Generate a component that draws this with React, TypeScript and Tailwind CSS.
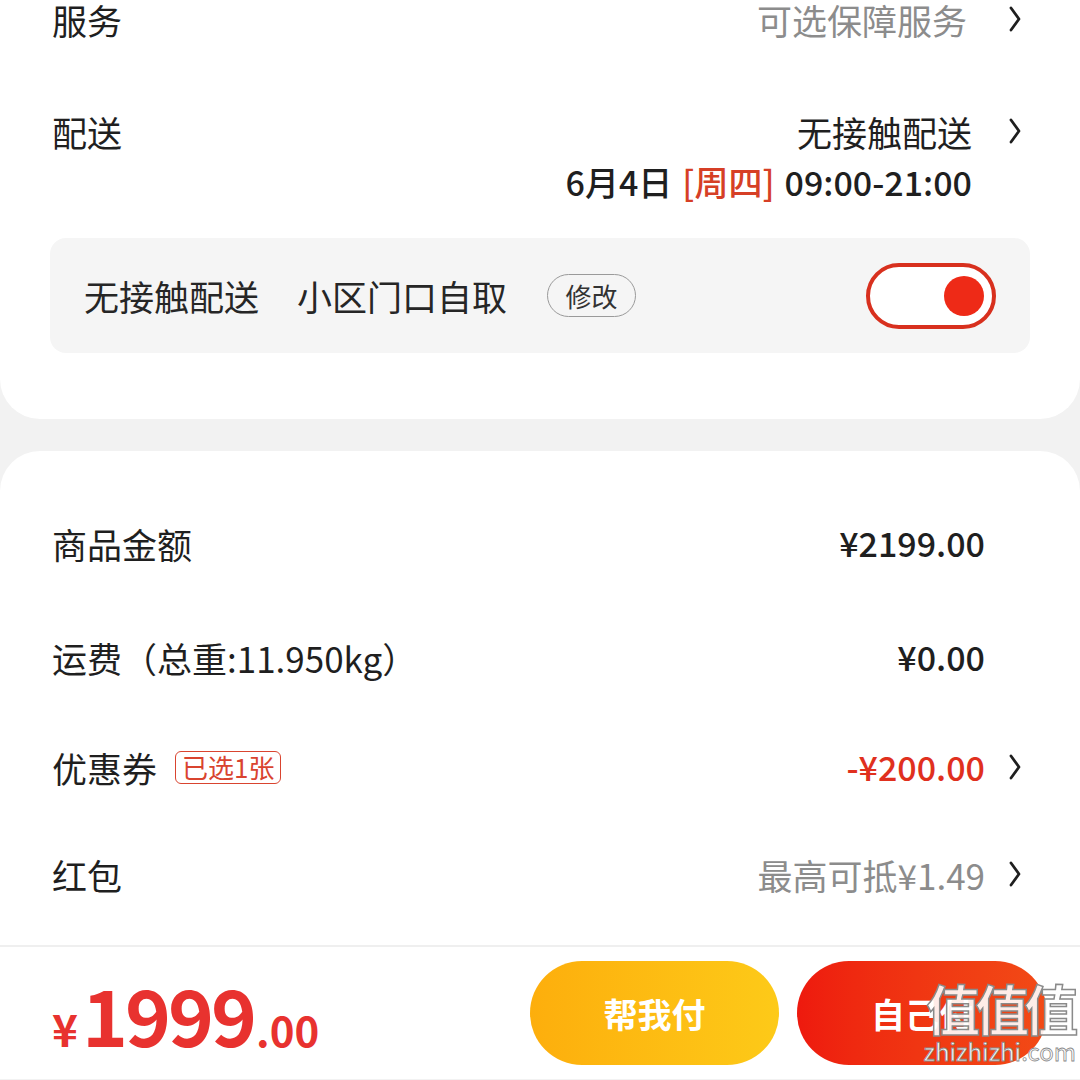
import React from "react";

const font = { fontFamily: '"Noto Sans CJK SC", "Noto Sans", sans-serif' };

function Chevron() {
  return (
    <span className="flex w-[37px] justify-end">
      <svg width="14" height="26" viewBox="0 0 14 26" fill="none">
        <polyline
          points="3,2 11,13 3,24"
          stroke="#1f1f1f"
          strokeWidth="2.8"
          strokeLinecap="round"
          strokeLinejoin="round"
        />
      </svg>
    </span>
  );
}

function Row({
  label,
  right,
  arrow,
  className,
}: {
  label: React.ReactNode;
  right: React.ReactNode;
  arrow?: boolean;
  className: string;
}) {
  return (
    <div className={`flex items-center justify-between ${className}`}>
      <div className="flex items-center text-[35px] leading-none text-[#1f1f1f]">{label}</div>
      <div className="flex items-center">
        {right}
        {arrow ? <Chevron /> : <span className="w-[37px]" />}
      </div>
    </div>
  );
}

export default function App() {
  return (
    <div style={font} className="h-[1080px] w-[1080px] overflow-hidden bg-[#f2f2f2]">
      {/* top card: service + delivery */}
      <div className="rounded-b-[40px] bg-white px-[52px] pb-[66px]">
        <Row
          className="h-[38px] pr-[6px]"
          label="服务"
          arrow
          right={<span className="mr-[18px] text-[35px] leading-none text-[#8c8c8c]">可选保障服务</span>}
        />
        <Row
          className="mt-[74px] h-[38px] pr-[6px]"
          label="配送"
          arrow
          right={<span className="mr-[13px] text-[35px] leading-none text-[#1f1f1f]">无接触配送</span>}
        />
        <div className="mt-[12px] flex h-[40px] items-center justify-end pr-[56px] text-[34px] font-medium leading-none text-[#1f1f1f]">
          <span>6月4日</span>
          <span className="mx-[10px] text-[#d63f26]">[周四]</span>
          <span>09:00-21:00</span>
        </div>

        <div className="-mx-[2px] mt-[36px] flex h-[115px] items-center justify-between rounded-[16px] bg-[#f5f5f5] pl-[34px] pr-[34px]">
          <div className="flex items-center text-[35px] leading-none text-[#262626]">
            <span>无接触配送</span>
            <span className="ml-[38px]">小区门口自取</span>
            <span className="ml-[40px] flex h-[43px] w-[89px] items-center justify-center rounded-full border border-[#9a9a9a] text-[26px] text-[#333]">
              修改
            </span>
          </div>
          <div className="flex h-[66px] w-[130px] items-center justify-end rounded-full border-[4px] border-[#d8301e] bg-white pr-[8px]">
            <span className="h-[40px] w-[40px] rounded-full bg-[#ee2a17]" />
          </div>
        </div>
      </div>

      {/* amounts card */}
      <div className="mt-[32px] rounded-t-[40px] bg-white px-[52px] pt-[35px]">
        <Row
          className="h-[114px] pr-[6px]"
          label="商品金额"
          right={<span className="text-[34px] font-medium leading-none text-[#1f1f1f]">¥2199.00</span>}
        />
        <Row
          className="h-[114px] pr-[6px]"
          label="运费（总重:11.950kg）"
          right={<span className="text-[34px] font-medium leading-none text-[#1f1f1f]">¥0.00</span>}
        />
        <Row
          className="h-[106px] pr-[6px]"
          label={
            <>
              <span>优惠券</span>
              <span className="ml-[18px] flex h-[33px] items-center rounded-[6px] border border-[#d9442f] px-[6px] text-[26px] leading-none text-[#d9442f]">
                已选1张
              </span>
            </>
          }
          arrow
          right={<span className="text-[34px] font-medium leading-none text-[#e0301e]">-¥200.00</span>}
        />
        <Row
          className="h-[108px] pr-[6px]"
          label="红包"
          arrow
          right={<span className="text-[35px] leading-none text-[#8c8c8c]">最高可抵¥1.49</span>}
        />
        <div className="h-[17px]" />
      </div>

      {/* bottom bar */}
      <div className="relative flex h-[134px] items-center justify-between border-t-2 border-[#efefef] bg-white pl-[52px] pr-[33px]">
        <div className="flex items-baseline font-bold leading-none text-[#e8322f]">
          <span className="text-[44px]">¥</span>
          <span className="ml-[4px] text-[78px] tracking-[-3px]">1999</span>
          <span className="ml-[2px] text-[42px]">.00</span>
        </div>
        <div className="flex items-center gap-[18px]">
          <button className="flex h-[104px] w-[249px] items-center justify-center rounded-full bg-gradient-to-r from-[#fdae0c] to-[#fdca18] text-[34px] font-bold text-white">
            帮我付
          </button>
          <button className="flex h-[104px] w-[250px] items-center justify-center rounded-full bg-gradient-to-r from-[#ee190e] to-[#f24a16] text-[34px] font-bold text-white">
            自己付
          </button>
        </div>

        {/* site watermark */}
        <div className="pointer-events-none absolute right-[4px] top-[34px] flex flex-col items-center leading-none">
          <span className="text-[54px] font-bold tracking-[-5px] text-white/90 [-webkit-text-stroke:1.5px_#8a8a8a]">
            值值值
          </span>
          <span className="mt-[4px] text-[24px] text-white [-webkit-text-stroke:0.8px_#8a8a8a]">
            zhizhizhi.com
          </span>
        </div>
      </div>
    </div>
  );
}
